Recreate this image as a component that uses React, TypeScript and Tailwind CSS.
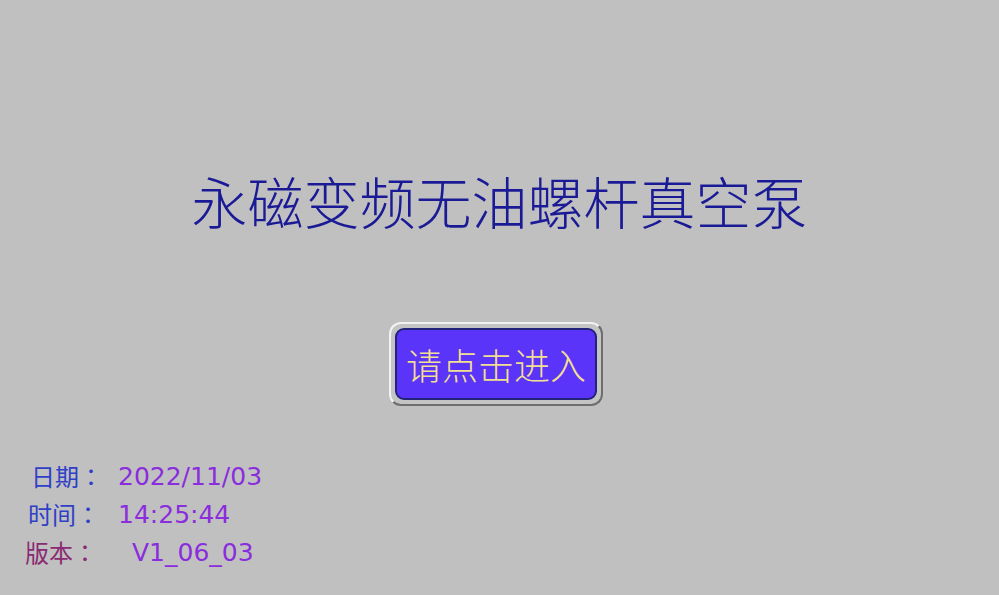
export default function App() {
  const rows = [
    { label: "日期：", value: "2022/11/03", pl: "pl-[31px]", w: "w-[87px]", color: "text-[#2f3fc6]" },
    { label: "时间：", value: "14:25:44", pl: "pl-[28px]", w: "w-[90px]", color: "text-[#2f3fc6]" },
    { label: "版本：", value: "V1_06_03", pl: "pl-[25px]", w: "w-[107px]", color: "text-[#8a2a72]" },
  ];

  return (
    <div className="w-[999px] h-[595px] overflow-hidden bg-[#c0c0c0] flex flex-col font-['Noto_Sans_CJK_SC',sans-serif]">
      <h1 className="pt-[172px] text-center text-[56px] leading-[56px] font-light text-[#1a1a96]">
        永磁变频无油螺杆真空泵
      </h1>

      <div className="mt-[94px] flex justify-center pr-[7px]">
        <button className="w-[214px] h-[84px] rounded-[12px] border-2 border-t-[#f2f2f2] border-l-[#f2f2f2] border-b-[#6e6e6e] border-r-[#6e6e6e] bg-[#c4c4c4] p-[4px]">
          <div className="w-full h-full rounded-[9px] bg-[#5b34fa] border-2 border-[#23237a] flex items-center justify-center text-[36px] leading-none font-light text-[#f1df92]">
            请点击进入
          </div>
        </button>
      </div>

      <div className="mt-[51px] flex flex-col">
        {rows.map((r) => (
          <div key={r.label} className={`flex items-center h-[38px] ${r.pl}`}>
            <span className={`${r.w} text-[24px] leading-none font-['Noto_Sans_CJK_TC',sans-serif] ${r.color}`}>
              {r.label}
            </span>
            <span className="text-[25px] leading-none text-[#8a2ddc] font-['DejaVu_Sans',sans-serif]">
              {r.value}
            </span>
          </div>
        ))}
      </div>
    </div>
  );
}
